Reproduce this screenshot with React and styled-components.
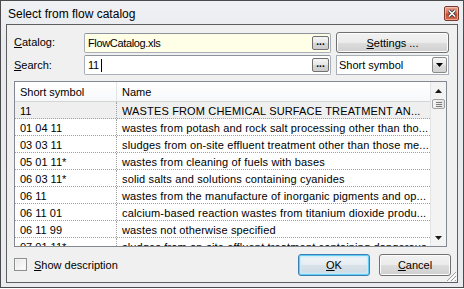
import styled, { createGlobalStyle } from 'styled-components';

const GlobalStyle = createGlobalStyle`
  body {
    margin: 0;
    background: #ffffff;
    font-family: "Liberation Sans", Arial, sans-serif;
    font-size: 11px;
    color: #000;
  }
`;

const rows = [
  ['11', 'WASTES FROM CHEMICAL SURFACE TREATMENT AN...'],
  ['01 04 11', 'wastes from potash and rock salt processing other than tho...'],
  ['03 03 11', 'sludges from on-site effluent treatment other than those me...'],
  ['05 01 11*', 'wastes from cleaning of fuels with bases'],
  ['06 03 11*', 'solid salts and solutions containing cyanides'],
  ['06 11', 'wastes from the manufacture of inorganic pigments and op...'],
  ['06 11 01', 'calcium-based reaction wastes from titanium dioxide produ...'],
  ['06 11 99', 'wastes not otherwise specified'],
  ['07 01 11*', 'sludges from on-site effluent treatment containing dangerous...'],
];

const App = () => {
  return (
    <>
      <GlobalStyle />
      <Window>
        <TitleBar>
          <Title>Select from flow catalog</Title>
          <CloseButton>
            <svg width="10" height="9" viewBox="0 0 10 9">
              <path d="M2 1.5 L8 7.5 M8 1.5 L2 7.5" stroke="#3a3a3a" strokeWidth="3.2" />
              <path d="M2 1.5 L8 7.5 M8 1.5 L2 7.5" stroke="#ffffff" strokeWidth="1.6" />
            </svg>
          </CloseButton>
        </TitleBar>

        <Client>
          <Form>
            <Label>
              <u>C</u>atalog:
            </Label>
            <Field $bg="#fffee6">
              <FieldText>FlowCatalog.xls</FieldText>
              <BrowseButton>...</BrowseButton>
            </Field>
            <Side>
              <Button $h={21}>
                <u>S</u>ettings ...
              </Button>
            </Side>

            <Label>
              <u>S</u>earch:
            </Label>
            <Field $bg="#ffffff">
              <FieldText>
                11<Caret />
              </FieldText>
              <BrowseButton>...</BrowseButton>
            </Field>
            <Side>
              <Select>
                <span>Short symbol</span>
                <SelectArrow>
                  <svg width="7" height="4" viewBox="0 0 7 4">
                    <path d="M0 0 H7 L3.5 4 Z" fill="#000" />
                  </svg>
                </SelectArrow>
              </Select>
            </Side>
          </Form>

          <Table>
            <List>
              <HeaderRow>
                <HeadCell $first>Short symbol</HeadCell>
                <HeadCell>Name</HeadCell>
              </HeaderRow>
              {rows.map(([code, name], i) => (
                <Row key={code} $selected={i === 0}>
                  <Cell $first>{code}</Cell>
                  <Cell $name>{name}</Cell>
                </Row>
              ))}
            </List>
            <ScrollBar>
              <ScrollArrow>
                <svg width="7" height="4" viewBox="0 0 7 4">
                  <path d="M0 4 H7 L3.5 0 Z" fill="#1a1a1a" />
                </svg>
              </ScrollArrow>
              <Thumb>
                <GripLine />
                <GripLine />
                <GripLine />
              </Thumb>
              <Track />
              <ScrollArrow>
                <svg width="7" height="4" viewBox="0 0 7 4">
                  <path d="M0 0 H7 L3.5 4 Z" fill="#1a1a1a" />
                </svg>
              </ScrollArrow>
            </ScrollBar>
          </Table>

          <Footer>
            <CheckLabel>
              <CheckBox />
              <span>
                <u>S</u>how description
              </span>
            </CheckLabel>
            <Buttons>
              <Button $w={72} $h={22} $focused>
                <u>O</u>K
              </Button>
              <Button $w={72} $h={22}>
                <u>C</u>ancel
              </Button>
            </Buttons>
          </Footer>

          <Grip>
            <svg width="12" height="12" viewBox="0 0 12 12">
              <path d="M11 2 L2 11 M11 6 L6 11 M11 10 L10 11" stroke="#a0a0a0" strokeWidth="1" />
              <path d="M12 3 L3 12 M12 7 L7 12" stroke="#ffffff" strokeWidth="1" />
            </svg>
          </Grip>
        </Client>
      </Window>
    </>
  );
};

export default App;

const Window = styled.div`
  width: 464px;
  height: 288px;
  box-sizing: border-box;
  border: 1px solid #4b4b4b;
  background: linear-gradient(#eff1f4, #e8eaed 40px, #e9ebee);
  display: flex;
  flex-direction: column;
  padding: 0 5px 4px 5px;
`;

const TitleBar = styled.div`
  height: 23px;
  display: flex;
  align-items: flex-start;
  justify-content: space-between;
  padding-left: 2px;
`;

const Title = styled.div`
  font-size: 12px;
  line-height: 12px;
  padding-top: 7px;
  color: #000;
`;

const CloseButton = styled.div`
  width: 15px;
  height: 15px;
  margin-top: 5px;
  margin-right: -1px;
  box-sizing: border-box;
  border: 1px solid #7a3b2e;
  border-radius: 2px;
  background: linear-gradient(#e9a593, #d8735b 45%, #c7492e 55%, #d96b4e);
  box-shadow: inset 0 0 0 1px rgba(255, 220, 210, 0.5);
  display: flex;
  align-items: center;
  justify-content: center;
`;

const Client = styled.div`
  position: relative;
  flex: 1;
  box-sizing: border-box;
  border: 1px solid #5e5e5e;
  background: #f0f0f0;
  padding: 7px 8px 0 7px;
  display: flex;
  flex-direction: column;
`;

const Form = styled.div`
  display: grid;
  grid-template-columns: 70px 247px 1fr;
  grid-template-rows: 21px 20px;
  row-gap: 2px;
  align-items: center;
`;

const Label = styled.div`
  font-size: 11px;
  line-height: 13px;
`;

const Field = styled.div`
  height: 20px;
  box-sizing: border-box;
  border: 1px solid #a9afb8;
  border-top-color: #8e949c;
  border-radius: 2px;
  background: ${(p) => p.$bg};
  display: flex;
  align-items: center;
  padding: 0 1px 0 3px;
`;

const FieldText = styled.div`
  flex: 1;
  display: flex;
  align-items: center;
  font-size: 11px;
  letter-spacing: -0.35px;
  white-space: nowrap;
`;

const Caret = styled.span`
  display: inline-block;
  width: 1px;
  height: 13px;
  margin-left: 2px;
  background: #000;
`;

const BrowseButton = styled.div`
  width: 17px;
  height: 14px;
  box-sizing: border-box;
  border: 1px solid #707070;
  border-radius: 2px;
  background: linear-gradient(#f6f6f6, #e6e6e6 50%, #d6d6d6 51%, #cdcdcd);
  font-size: 10px;
  font-weight: bold;
  line-height: 10px;
  text-align: center;
  letter-spacing: 0;
  overflow: hidden;
`;

const Side = styled.div`
  padding-left: 5px;
`;

const Button = styled.div`
  width: ${(p) => (p.$w ? `${p.$w}px` : 'auto')};
  height: ${(p) => p.$h}px;
  box-sizing: border-box;
  border: 1px solid ${(p) => (p.$focused ? '#3c7fb1' : '#707070')};
  border-radius: 3px;
  background: ${(p) =>
    p.$focused
      ? 'linear-gradient(#f0f5f8, #e6edf2 50%, #d8e2e9 51%, #cdd9e2)'
      : 'linear-gradient(#f2f2f2, #ebebeb 50%, #dddddd 51%, #cfcfcf)'};
  box-shadow: ${(p) =>
    p.$focused ? 'inset 0 0 0 1px #5fcdf7, inset 0 0 2px 2px #c8ecfb' : 'inset 0 0 0 1px #fcfcfc'};
  display: flex;
  align-items: center;
  justify-content: center;
  font-size: 11px;
`;

const Select = styled.div`
  height: 20px;
  box-sizing: border-box;
  border: 1px solid #a9afb8;
  background: #fff;
  display: flex;
  align-items: center;
  justify-content: space-between;
  padding: 0 1px 0 2px;
  font-size: 11px;
`;

const SelectArrow = styled.div`
  width: 15px;
  height: 16px;
  box-sizing: border-box;
  border: 1px solid #8a8a8a;
  border-radius: 2px;
  background: linear-gradient(#f6f6f6, #e8e8e8 50%, #dcdcdc 51%, #d2d2d2);
  display: flex;
  align-items: center;
  justify-content: center;
`;

const Table = styled.div`
  margin-top: 6px;
  width: 433px;
  height: 166px;
  box-sizing: border-box;
  border: 1px solid #828790;
  background: #fff;
  display: flex;
`;

const List = styled.div`
  flex: 1;
  overflow: hidden;
`;

const HeaderRow = styled.div`
  height: 20px;
  box-sizing: border-box;
  border-bottom: 1px solid #d5d5d5;
  background: linear-gradient(#ffffff, #f7f8fa);
  display: flex;
`;

const HeadCell = styled.div`
  width: ${(p) => (p.$first ? '102px' : 'auto')};
  flex: ${(p) => (p.$first ? 'none' : '1')};
  box-sizing: border-box;
  border-right: ${(p) => (p.$first ? '1px solid #e3e5e8' : 'none')};
  padding: 4px 0 0 5px;
  font-size: 11px;
  line-height: 13px;
`;

const Row = styled.div`
  height: 17px;
  box-sizing: border-box;
  border-bottom: 1px dotted #a0a0a0;
  background: ${(p) => (p.$selected ? '#efefef' : '#ffffff')};
  display: flex;
`;

const Cell = styled.div`
  width: ${(p) => (p.$first ? '102px' : 'auto')};
  flex: ${(p) => (p.$first ? 'none' : '1')};
  min-width: 0;
  box-sizing: border-box;
  border-right: ${(p) => (p.$first ? '1px dotted #a0a0a0' : 'none')};
  padding: 3px 0 0 5px;
  font-size: 11px;
  line-height: 13px;
  letter-spacing: ${(p) => (p.$name ? '0.15px' : '0')};
  white-space: nowrap;
  overflow: hidden;
`;

const ScrollBar = styled.div`
  width: 16px;
  box-sizing: border-box;
  border-left: 1px solid #e4e4e4;
  background: #f3f3f3;
  display: flex;
  flex-direction: column;
  align-items: center;
`;

const ScrollArrow = styled.div`
  height: 17px;
  width: 100%;
  display: flex;
  align-items: center;
  justify-content: center;
`;

const Thumb = styled.div`
  width: 13px;
  height: 10px;
  box-sizing: border-box;
  border: 1px solid #a2a2a2;
  border-radius: 2px;
  background: linear-gradient(90deg, #f4f4f4, #e2e2e2);
  display: flex;
  flex-direction: column;
  align-items: center;
  justify-content: center;
  gap: 1px;
`;

const GripLine = styled.div`
  width: 6px;
  height: 1px;
  background: #7a7a7a;
`;

const Track = styled.div`
  flex: 1;
`;

const Footer = styled.div`
  margin-top: 7px;
  margin-right: -2px;
  display: flex;
  align-items: flex-start;
  justify-content: space-between;
`;

const CheckLabel = styled.div`
  display: flex;
  align-items: center;
  gap: 7px;
  padding-top: 4px;
  font-size: 11px;
`;

const CheckBox = styled.div`
  width: 13px;
  height: 13px;
  box-sizing: border-box;
  border: 1px solid #8e8f8f;
  background: linear-gradient(135deg, #e6e6e6, #ffffff);
  box-shadow: inset 0 0 0 1px #f4f4f4;
`;

const Buttons = styled.div`
  display: flex;
  gap: 9px;
`;

const Grip = styled.div`
  position: absolute;
  right: 0;
  bottom: 0;
  width: 12px;
  height: 12px;
`;
